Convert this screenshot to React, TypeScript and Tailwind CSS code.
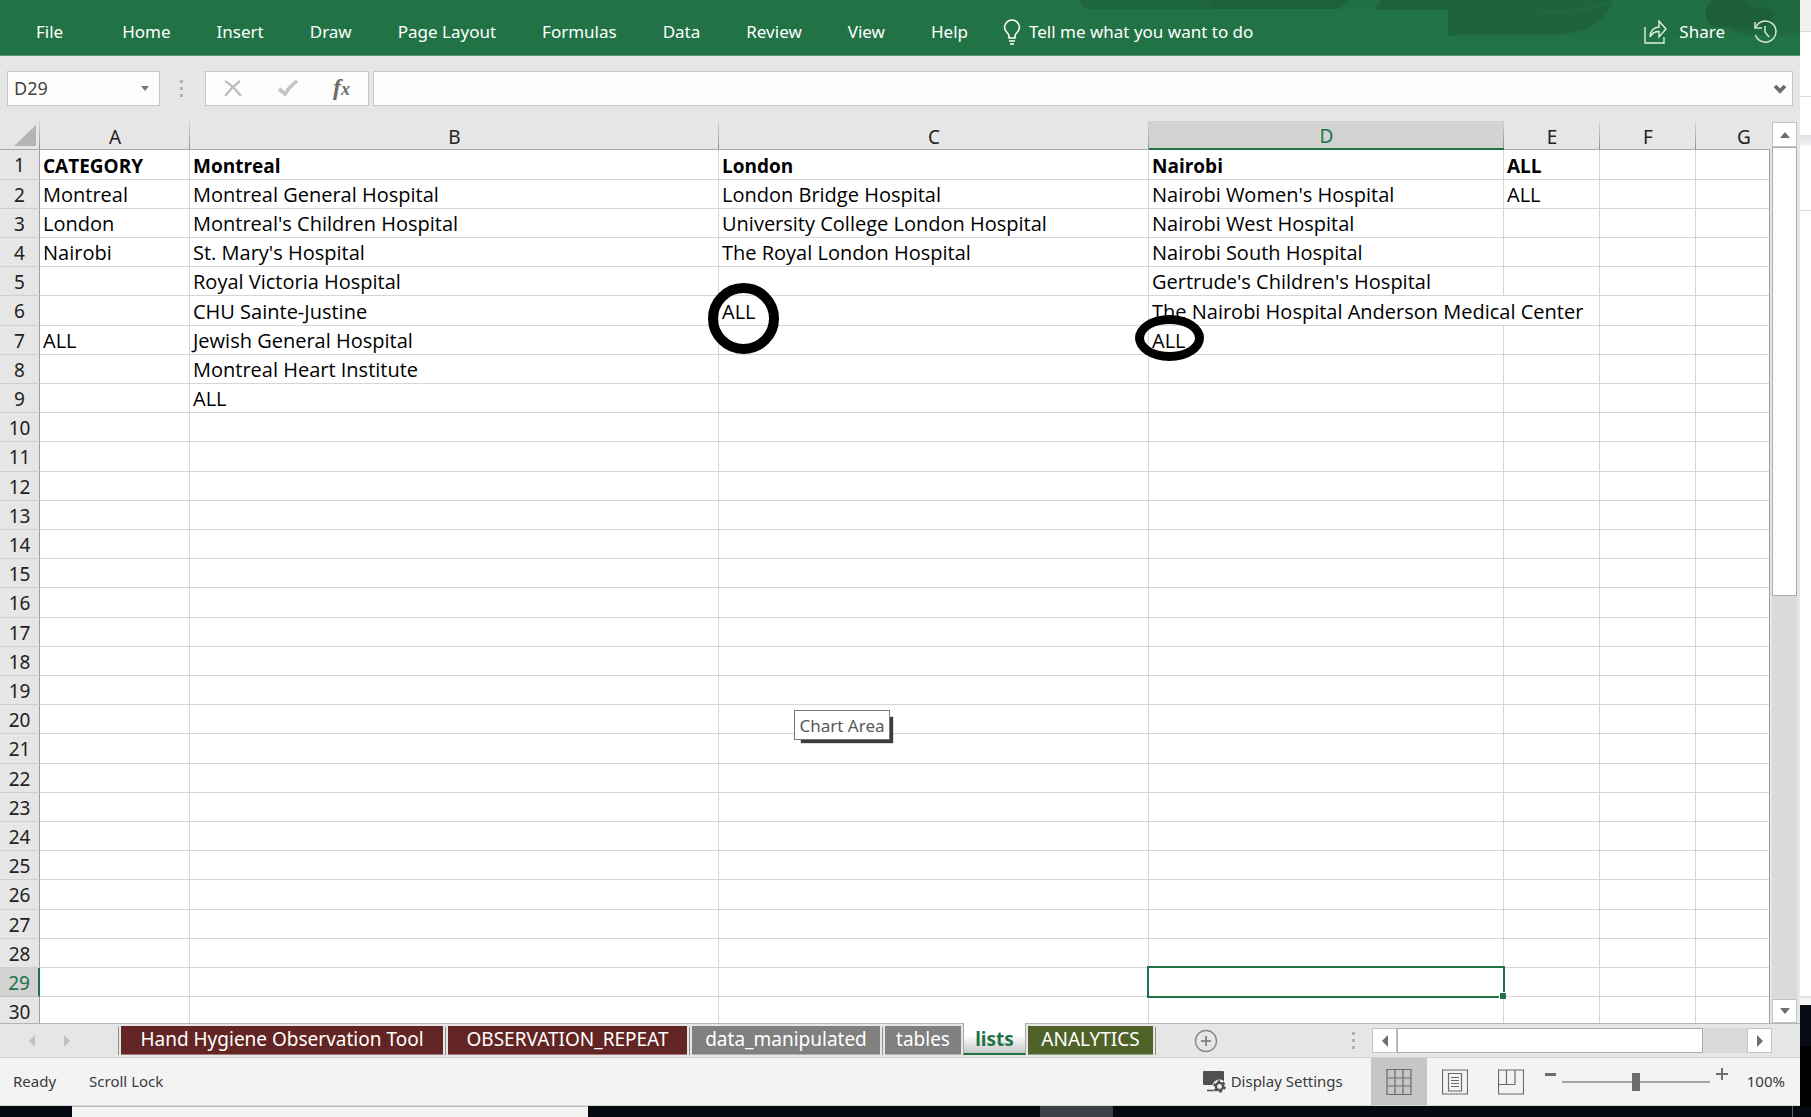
import type { ReactNode } from "react";

const MENU = ["Home", "Insert", "Draw", "Page Layout", "Formulas", "Data", "Review", "View", "Help"];

const COLUMNS = [
  { name: "A", width: "w-[150px]" },
  { name: "B", width: "w-[529px]" },
  { name: "C", width: "w-[430px]" },
  { name: "D", width: "w-[355px]" },
  { name: "E", width: "w-[96px]" },
  { name: "F", width: "w-[96px]" },
  { name: "G", width: "w-[96px]" },
];

const DATA: Record<string, string> = {
  A1: "CATEGORY", B1: "Montreal", C1: "London", D1: "Nairobi", E1: "ALL",
  A2: "Montreal", B2: "Montreal General Hospital", C2: "London Bridge Hospital", D2: "Nairobi Women's Hospital", E2: "ALL",
  A3: "London", B3: "Montreal's Children Hospital", C3: "University College London Hospital", D3: "Nairobi West Hospital",
  A4: "Nairobi", B4: "St. Mary's Hospital", C4: "The Royal London Hospital", D4: "Nairobi South Hospital",
  B5: "Royal Victoria Hospital", D5: "Gertrude's Children's Hospital",
  B6: "CHU Sainte-Justine", C6: "ALL", D6: "The Nairobi Hospital Anderson Medical Center",
  A7: "ALL", B7: "Jewish General Hospital", D7: "ALL",
  B8: "Montreal Heart Institute",
  B9: "ALL",
};

const OVERLAYS: Record<string, ReactNode> = {
  C6: <span className="absolute -top-[13px] -left-[11px] z-10 h-[71px] w-[71px] rounded-full border-10 border-black" />,
  D7: <span className="absolute -top-[11px] -left-[14px] z-10 h-[46px] w-[69px] rounded-[50%] border-9 border-black" />,
  C20: (
    <span className="absolute top-[5px] left-[75px] z-10 flex h-[30px] w-[96px] items-center justify-center border border-[#767676] bg-white pt-[2px] font-['Noto_Sans',sans-serif] text-[17px] text-[#575757] shadow-[5px_5px_1px_-2px_#3c3c3c]">
      Chart Area
    </span>
  ),
  D29: (
    <span className="absolute -top-[2px] -right-[2px] -bottom-[2px] -left-[2px] z-10 border-2 border-[#217346]">
      <span className="absolute -right-[3px] -bottom-[3px] h-[7px] w-[7px] border-t border-l border-white bg-[#217346]" />
    </span>
  ),
};

const TABS = [
  { name: "Hand Hygiene Observation Tool", style: "w-[322px] bg-[#632523]" },
  { name: "OBSERVATION_REPEAT", style: "w-[239px] bg-[#632523]" },
  { name: "data_manipulated", style: "w-[188px] bg-[#808080]" },
  { name: "tables", style: "w-[76px] bg-[#808080]" },
  { name: "lists", style: "" },
  { name: "ANALYTICS", style: "w-[125px] bg-[#4f6228]" },
];

function Dots() {
  return (
    <span className="flex flex-col gap-1">
      <i className="h-[3px] w-[3px] bg-[#b0b0b0]" />
      <i className="h-[3px] w-[3px] bg-[#b0b0b0]" />
      <i className="h-[3px] w-[3px] bg-[#b0b0b0]" />
    </span>
  );
}

function Arrow({ d, w, h, color = "#6d6d6d" }: { d: string; w: number; h: number; color?: string }) {
  return (
    <svg width={w} height={h} viewBox={`0 0 ${w} ${h}`} aria-hidden="true">
      <path d={d} fill={color} />
    </svg>
  );
}

function Ribbon() {
  return (
    <header className="relative h-[56px] shrink-0 border-b border-[#5c9a78] bg-[#217346] text-[17px] text-white">
      <svg className="absolute top-0 right-0" width="720" height="37" viewBox="0 0 720 37" aria-hidden="true">
        <defs>
          <linearGradient id="fade" x1="0" x2="1">
            <stop offset="0" stopColor="#1e623b" />
            <stop offset="1" stopColor="#1e623b" stopOpacity="0.4" />
          </linearGradient>
        </defs>
        <path d="M0 0H368V9H0Z" fill="#216d41" opacity="0.5" />
        <path d="M0 0H130V9H5Z" fill="#1e623b" opacity="0.7" />
        <path d="M130 0H270L258 9H130Z" fill="#1e623b" />
        <path d="M302 0H368V10H294Z" fill="#1e623b" />
        <path d="M368 0H720V37H368Z" fill="#207043" />
        <path d="M368 0H532C530 16 515 28 490 33C450 37 400 32 368 36Z" fill="#1e633c" />
        <path d="M459 12Q500 14 530 2" fill="none" stroke="#1f693f" strokeWidth="3" />
        <path d="M632 0C622 8 624 24 636 28C650 24 650 34 672 35H720V0Z" fill="url(#fade)" />
        <path d="M634 0C620 10 625 28 640 27C652 22 660 30 676 26C694 28 698 14 688 8C676 6 672 14 664 0Z" fill="#1d5f39" />
      </svg>
      <div className="relative flex h-full items-center pt-[9px] pr-[23px] pl-9">
        <button className="mr-[59px]">File</button>
        <nav className="flex gap-[46px]">
          {MENU.map((m) => (
            <button key={m} className="whitespace-nowrap">{m}</button>
          ))}
        </nav>
        <button className="ml-[35px] flex items-center gap-[8px] whitespace-nowrap">
          <svg width="18" height="26" viewBox="0 0 18 26" fill="none" stroke="#fff" strokeWidth="1.6" aria-hidden="true">
            <path d="M6 19V17C6 14 1.500 13 1.500 8.500A7.500 7.500 0 0 1 16.500 8.500C16.500 13 12 14 12 17V19Z" />
            <path d="M6 22H12M7 25H11" />
          </svg>
          Tell me what you want to do
        </button>
        <button className="ml-auto flex items-center gap-[10px]">
          <svg width="25" height="24" viewBox="0 0 25 24" fill="none" stroke="#e2eee7" strokeWidth="1.4" aria-hidden="true">
            <path d="M1 7V23H20V17" />
            <path d="M6 17C6 11 10 7 15 7V1L22 9L15 17V11.500C11 11.500 8 13 6 17Z" />
          </svg>
          Share
        </button>
        <button className="ml-[29px]" aria-label="Version history">
          <svg width="23" height="24" viewBox="0 0 23 24" fill="none" stroke="#d5e6dc" strokeWidth="1.5" aria-hidden="true">
            <path d="M2 7A10.500 10.500 0 1 1 1.500 15" />
            <path d="M1 2V8H8M11 6V12L15 17" />
          </svg>
        </button>
      </div>
    </header>
  );
}

function FormulaBar() {
  return (
    <div className="flex h-[65px] shrink-0 items-center pr-[7px] pl-[7px]">
      <div className="flex h-[35px] w-[153px] items-center border border-[#c6c6c6] bg-[#fdfdfd] pr-[10px] pl-[6px]">
        <input aria-label="Name box" defaultValue="D29" className="w-full min-w-0 bg-transparent text-[18px] text-[#444] outline-none" />
        <button aria-label="Name list"><Arrow w={8} h={5} d="M0 0H8L4 5Z" color="#777" /></button>
      </div>
      <div className="flex w-[45px] justify-center pr-[2px]"><Dots /></div>
      <div className="flex h-[35px] w-[164px] items-center justify-between border border-[#c6c6c6] bg-[#fdfdfd] pr-[18px] pl-[18px]">
        <button aria-label="Cancel">
          <svg width="18" height="17" viewBox="0 0 18 17" fill="none" stroke="#bdbdbd" strokeWidth="2.200" aria-hidden="true"><path d="M1 1Q9 6 17 16M16 1Q8 7 1 16" /></svg>
        </button>
        <button aria-label="Enter">
          <svg width="20" height="17" viewBox="0 0 20 17" fill="none" stroke="#c4c4c4" strokeWidth="3.800" aria-hidden="true"><path d="M1 9L7 14Q12 6 19 1" /></svg>
        </button>
        <button aria-label="Insert function" className="pb-1 font-['Liberation_Serif',serif] text-[24px] leading-none font-bold text-[#6b6b6b] italic">
          f<span className="text-[18px]">x</span>
        </button>
      </div>
      <div className="ml-1 flex h-[35px] min-w-0 flex-1 items-center border border-[#c6c6c6] bg-[#fdfdfd] pr-[5px]">
        <input aria-label="Formula" className="w-full min-w-0 bg-transparent px-2 text-[18px] outline-none" />
        <button aria-label="Expand formula bar">
          <svg width="14" height="10" viewBox="0 0 14 10" fill="none" stroke="#6d6d6d" strokeWidth="3.800" aria-hidden="true"><path d="M2 2L7 7L12 2" /></svg>
        </button>
      </div>
    </div>
  );
}

function Row({ n }: { n: number }) {
  const active = n === 29;
  return (
    <tr className={n % 5 === 1 ? "h-[30px]" : "h-[29px]"}>
      <th
        scope="row"
        className={
          active
            ? "border-r-2 border-b border-r-[#217346] border-b-[#bdbdbd] bg-[#d2d2d2] px-0 pt-px pb-0 text-center font-normal text-[#217346]"
            : "border-r border-b border-r-[#9f9f9f] border-b-[#cfcfcf] bg-[#e6e6e6] px-0 pt-px pb-0 text-center font-normal text-[#222]"
        }
      >
        {n}
      </th>
      {COLUMNS.map(({ name }) => {
        const id = name + n;
        if (id === "E6") return null;
        return (
          <td
            key={id}
            colSpan={id === "D6" ? 2 : 1}
            className={
              (n === 1 ? "text-[19px] font-bold " : "text-[20px] ") +
              "relative border-r border-b border-[#d6d6d6] pt-[2px] pr-0 pb-0 pl-[3px] font-['Open_Sans',sans-serif] leading-[26px] whitespace-nowrap text-black"
            }
          >
            {DATA[id]}
            {OVERLAYS[id]}
          </td>
        );
      })}
    </tr>
  );
}

function Sheet() {
  return (
    <div className="flex min-h-0 flex-1">
      <div className="relative min-w-0 flex-1 overflow-hidden after:absolute after:top-[29px] after:right-0 after:bottom-0 after:w-px after:bg-[#9a9a9a]">
        <table className="w-[1792px] table-fixed border-separate border-spacing-0 bg-white text-[19px] leading-[26px]">
          <thead>
            <tr className="h-[29px]">
              <th className="w-[40px] border-b border-[#ababab] bg-[#e6e6e6] bg-[linear-gradient(#d5d5d5,#8f8f8f)] bg-[length:1px_100%] bg-right bg-no-repeat p-0">
                <button aria-label="Select all" className="ml-[14px] block"><Arrow w={22} h={21} d="M22 0V21H0Z" color="#b4b4b4" /></button>
              </th>
              {COLUMNS.map(({ name, width }) => (
                <th
                  key={name}
                  scope="col"
                  className={
                    width +
                    (name === "D"
                      ? " border-b-2 border-[#217346] bg-[#d2d2d2] pt-[3px] text-[#217346]"
                      : " border-b border-[#ababab] bg-[#e6e6e6] pt-1 text-[#222]") +
                    " bg-[linear-gradient(#d5d5d5,#8f8f8f)] bg-[length:1px_100%] bg-right bg-no-repeat px-0 pb-0 leading-[24px] font-normal"
                  }
                >
                  {name}
                </th>
              ))}
            </tr>
          </thead>
          <tbody>
            {Array.from({ length: 30 }, (_, i) => <Row key={i} n={i + 1} />)}
          </tbody>
        </table>
      </div>
      <div className="flex w-[30px] shrink-0 flex-col bg-[#e6e6e6] pt-px pr-[3px] pl-[2px]">
        <button aria-label="Scroll up" className="flex h-[25px] items-center justify-center border border-[#c3c3c3] bg-white"><Arrow w={10} h={6} d="M5 0L10 6H0Z" /></button>
        <div className="flex-1 bg-[#dadada]">
          <div className="h-[449px] border border-[#ababab] bg-white" />
        </div>
        <button aria-label="Scroll down" className="flex h-[24px] items-center justify-center border border-[#c3c3c3] bg-white"><Arrow w={10} h={6} d="M0 0H10L5 6Z" /></button>
      </div>
    </div>
  );
}

function SheetTabs() {
  return (
    <div className="flex h-[35px] shrink-0 border-t border-b border-t-[#b4b4b4] border-b-[#d4d4d4] bg-[#e6e6e6]">
      <div className="flex w-[118px] items-center gap-[29px] pl-[29px]">
        <button aria-label="Previous sheets"><Arrow w={6} h={12} d="M6 0V12L0 6Z" color="#c0c0c0" /></button>
        <button aria-label="Next sheets"><Arrow w={6} h={12} d="M0 0V12L6 6Z" color="#c0c0c0" /></button>
      </div>
      <div className="flex text-[19px] leading-[26px] whitespace-nowrap text-white">
        {TABS.map(({ name, style }, i) =>
          name === "lists" ? (
            <button key={name} className="-mt-px ml-[2px] h-[32px] w-[63px] border-r border-b-2 border-l border-r-[#a8a8a8] border-b-[#217346] border-l-[#a8a8a8] bg-linear-to-b from-white from-40% to-[#c8c8c8] pt-[2px] leading-[22px] font-bold text-[#217346]">
              {name}
            </button>
          ) : (
            <span key={name} className="flex">
              {i < 5 && <i className={i === 0 ? "mt-[3px] mr-[2px] h-[28px] w-px bg-[#8e8e8e]" : "mt-[3px] mr-[2px] ml-[2px] h-[28px] w-px bg-[#8e8e8e]"} />}
              {i === 5 && <i className="mr-px w-px" />}
              <button className={style + " mt-[2px] h-[29px] border-b border-white/40 pb-[2px] text-center"}>{name}</button>
            </span>
          )
        )}
        <i className="mt-[3px] ml-[2px] h-[28px] w-px bg-[#8e8e8e]" />
      </div>
      <button aria-label="New sheet" className="ml-[38px]">
        <svg width="24" height="24" viewBox="0 0 24 24" fill="none" stroke="#8a8a8a" aria-hidden="true">
          <circle cx="12" cy="12" r="10.500" strokeWidth="1.400" />
          <path d="M12 7V17M7 12H17" strokeWidth="2" />
        </svg>
      </button>
      <div className="ml-auto flex items-center">
        <Dots />
        <div className="ml-[17px] flex h-[25px] w-[400px] bg-[#dadada]">
          <button aria-label="Scroll left" className="flex w-[25px] items-center justify-center border border-[#c3c3c3] bg-white"><Arrow w={6} h={12} d="M6 0V12L0 6Z" /></button>
          <div className="w-[306px] border border-[#ababab] bg-white" />
          <button aria-label="Scroll right" className="ml-auto flex w-[25px] items-center justify-center border border-[#c3c3c3] bg-white"><Arrow w={6} h={12} d="M0 0V12L6 6Z" /></button>
        </div>
        <div className="w-[28px]" />
      </div>
    </div>
  );
}

function StatusBar() {
  return (
    <footer className="flex h-[48px] shrink-0 items-center border-b border-[#d8d8d8] bg-[#f3f3f3] text-[15px] text-[#3a3a3a]">
      <span className="pl-[13px]">Ready</span>
      <span className="pl-[33px]">Scroll Lock</span>
      <button className="mr-[28px] ml-auto flex items-center gap-[5px]">
        <svg width="23" height="23" viewBox="0 0 23 23" aria-hidden="true">
          <rect width="21" height="14" y="1" rx="1" fill="#505050" />
          <path d="M4 20.500H12" stroke="#505050" strokeWidth="1.600" />
          <circle cx="16.500" cy="16.500" r="7" fill="#f3f3f3" />
          <circle cx="16.500" cy="16.500" r="3.600" fill="none" stroke="#505050" strokeWidth="2.400" />
          <circle cx="16.500" cy="16.500" r="5.300" fill="none" stroke="#505050" strokeWidth="2" strokeDasharray="2.775 2.775" />
        </svg>
        Display Settings
      </button>
      <button aria-label="Normal view" className="flex h-full w-[56px] items-center justify-center bg-[#c6c6c6]">
        <svg width="26" height="26" viewBox="0 0 26 26" fill="none" stroke="#6b6b6b" aria-hidden="true">
          <path d="M1 .5H25V25.500H1ZM9 .5V25.500M17 .5V25.500M1 9H25M1 17H25" strokeWidth="1.200" />
        </svg>
      </button>
      <button aria-label="Page layout view" className="flex h-full w-[56px] items-center justify-center">
        <svg width="26" height="26" viewBox="0 0 26 26" fill="none" stroke="#6b6b6b" aria-hidden="true">
          <path d="M.5 1H25.500V25H.5ZM6.500 4.500H19.500V22H6.500ZM9 8.500H17M9 11.500H17M9 14.500H17M9 17.500H17" strokeWidth="1.200" />
        </svg>
      </button>
      <button aria-label="Page break preview" className="flex h-full w-[56px] items-center justify-center">
        <svg width="26" height="26" viewBox="0 0 26 26" fill="none" stroke="#6b6b6b" aria-hidden="true">
          <path d="M.5 1H25.500V25H.5ZM8.500 1V15.500M17 1V15.500M.5 15.500H17" strokeWidth="1.200" />
        </svg>
      </button>
      <button aria-label="Zoom out" className="ml-[6px] pb-[16px]"><Arrow w={11} h={12} d="M0 5H11V8H0Z" /></button>
      <input
        type="range"
        aria-label="Zoom"
        defaultValue={50}
        className="mx-[6px] h-[18px] w-[148px] appearance-none bg-[linear-gradient(#a6a6a6,#a6a6a6)] bg-[length:100%_2px] bg-center bg-no-repeat [&::-webkit-slider-thumb]:h-[18px] [&::-webkit-slider-thumb]:w-[8px] [&::-webkit-slider-thumb]:appearance-none [&::-webkit-slider-thumb]:bg-[#6d6d6d]"
      />
      <button aria-label="Zoom in" className="pb-[16px]"><Arrow w={12} h={12} d="M0 5H5V0H7V5H12V7H7V12H5V7H0Z" /></button>
      <span className="pr-[15px] pl-[19px]">100%</span>
    </footer>
  );
}

export default function App() {
  return (
    <div className="flex h-screen flex-col overflow-hidden bg-white font-['Noto_Sans',sans-serif]">
      <div className="flex min-h-0 flex-1">
        <main className="flex min-w-0 flex-1 flex-col bg-[#e6e6e6]">
          <Ribbon />
          <FormulaBar />
          <Sheet />
          <SheetTabs />
          <StatusBar />
        </main>
        <aside className="flex w-[11px] shrink-0 flex-col bg-white">
          <div className="h-[32px] border-b border-[#dcdcdc] bg-[#f1f1f1]" />
          <div className="h-[65px] border-b border-[#d9dae0]" />
          <div className="h-[38px]" />
          <div className="h-[11px] bg-linear-to-b from-[#dfe0e4] to-[#f5f5f7]" />
          <div className="h-[65px] border-b border-[#d9dae0]" />
          <div className="flex-1" />
          <div className="h-[9px] border-t-2 border-[#e0e2e6] bg-[#f4f5f7]" />
          <div className="h-[41px] bg-[#060a12]" />
          <div className="h-[60px] bg-black" />
        </aside>
      </div>
      <div className="flex h-[11px] shrink-0 bg-[#050a12]">
        <div className="ml-[72px] w-[516px] border-t border-[#bcbcbc] bg-[#f2f2f2]" />
        <div className="ml-[452px] w-[73px] bg-[#3b3f47]" />
        <div className="mr-[18px] ml-auto w-px bg-[#5c6068]" />
      </div>
    </div>
  );
}
